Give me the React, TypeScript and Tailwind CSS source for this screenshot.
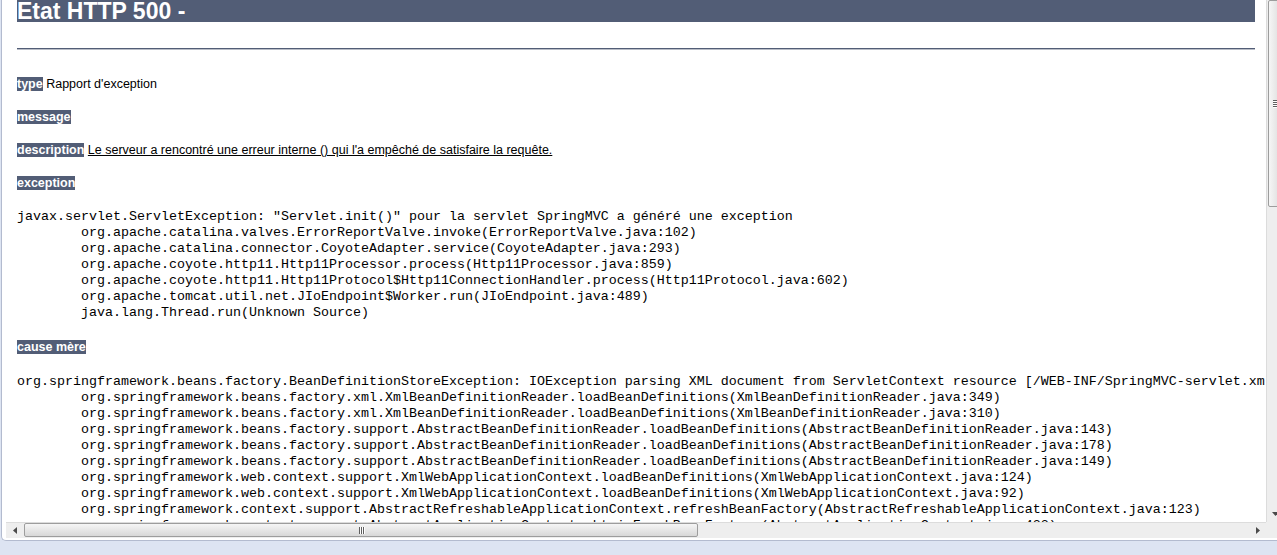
import React from 'react';

const sans = "font-['Liberation_Sans','Arial',sans-serif]";
const mono = "font-['Liberation_Mono','Courier_New',monospace]";

const TAB = '        ';

const exceptionLines = [
  'javax.servlet.ServletException: "Servlet.init()" pour la servlet SpringMVC a généré une exception',
  TAB + 'org.apache.catalina.valves.ErrorReportValve.invoke(ErrorReportValve.java:102)',
  TAB + 'org.apache.catalina.connector.CoyoteAdapter.service(CoyoteAdapter.java:293)',
  TAB + 'org.apache.coyote.http11.Http11Processor.process(Http11Processor.java:859)',
  TAB + 'org.apache.coyote.http11.Http11Protocol$Http11ConnectionHandler.process(Http11Protocol.java:602)',
  TAB + 'org.apache.tomcat.util.net.JIoEndpoint$Worker.run(JIoEndpoint.java:489)',
  TAB + 'java.lang.Thread.run(Unknown Source)',
];

const causeLines = [
  'org.springframework.beans.factory.BeanDefinitionStoreException: IOException parsing XML document from ServletContext resource [/WEB-INF/SpringMVC-servlet.xml]; nested exception is java.io.FileNotFoundException',
  TAB + 'org.springframework.beans.factory.xml.XmlBeanDefinitionReader.loadBeanDefinitions(XmlBeanDefinitionReader.java:349)',
  TAB + 'org.springframework.beans.factory.xml.XmlBeanDefinitionReader.loadBeanDefinitions(XmlBeanDefinitionReader.java:310)',
  TAB + 'org.springframework.beans.factory.support.AbstractBeanDefinitionReader.loadBeanDefinitions(AbstractBeanDefinitionReader.java:143)',
  TAB + 'org.springframework.beans.factory.support.AbstractBeanDefinitionReader.loadBeanDefinitions(AbstractBeanDefinitionReader.java:178)',
  TAB + 'org.springframework.beans.factory.support.AbstractBeanDefinitionReader.loadBeanDefinitions(AbstractBeanDefinitionReader.java:149)',
  TAB + 'org.springframework.web.context.support.XmlWebApplicationContext.loadBeanDefinitions(XmlWebApplicationContext.java:124)',
  TAB + 'org.springframework.web.context.support.XmlWebApplicationContext.loadBeanDefinitions(XmlWebApplicationContext.java:92)',
  TAB + 'org.springframework.context.support.AbstractRefreshableApplicationContext.refreshBeanFactory(AbstractRefreshableApplicationContext.java:123)',
  TAB + 'org.springframework.context.support.AbstractApplicationContext.obtainFreshBeanFactory(AbstractApplicationContext.java:422)',
  TAB + 'org.springframework.context.support.AbstractApplicationContext.refresh(AbstractApplicationContext.java:352)',
];

// label in the Tomcat style: white bold on slate
const Label = ({ children }: { children: React.ReactNode }) => (
  <b className="bg-[#525D76] text-white font-bold">{children}</b>
);

const Grip = ({ vertical }: { vertical?: boolean }) =>
  vertical ? (
    <div className="flex flex-col gap-[1px]">
      {[0, 1, 2, 3].map(i => (
        <div key={i} className="h-px w-[7px] bg-[#5f5f5f] shadow-[0_1px_0_#ffffff]" />
      ))}
    </div>
  ) : (
    <div className="flex gap-[1px]">
      {[0, 1, 2].map(i => (
        <div key={i} className="w-px h-[7px] bg-[#5f5f5f] shadow-[1px_0_0_#ffffff]" />
      ))}
    </div>
  );

const pClass = `${sans} text-[12.5px] leading-[15px] whitespace-nowrap`;

export default function App() {
  return (
    <div className="w-[1277px] h-[555px] bg-[#dde4f2] overflow-hidden">
      <div className="ml-[1px] h-[541px] bg-white border-l border-b border-[#b3bbcf] rounded-bl-[5px] flex flex-col overflow-hidden">
        <div className="flex h-[522px] shrink-0">
          {/* page viewport */}
          <div className="w-[1264px] shrink-0 overflow-hidden pl-[15px] text-black">
            <h1 className={`${sans} w-[1238px] h-[22px] leading-[22px] bg-[#525D76] text-white font-bold text-[23px] whitespace-nowrap overflow-hidden`}>
              Etat HTTP 500 -
            </h1>
            <div className="w-[1238px] mt-[26px] h-px bg-[#525D76]" />
            <div className="w-[1238px] h-px bg-[#b9bdc7]" />

            <p className={`${pClass} mt-[27px]`}>
              <Label>type</Label> Rapport d'exception
            </p>
            <p className={`${pClass} mt-[18px]`}>
              <Label>message</Label>
            </p>
            <p className={`${pClass} mt-[18px]`}>
              <Label>description</Label>{' '}
              <u>Le serveur a rencontré une erreur interne () qui l'a empêché de satisfaire la requête.</u>
            </p>
            <p className={`${pClass} mt-[18px]`}>
              <Label>exception</Label>
            </p>
            <pre className={`${mono} mt-[18px] text-[13.33px] leading-[16px] whitespace-pre`}>
              {exceptionLines.join('\n')}
            </pre>
            <p className={`${pClass} mt-[19px]`}>
              <Label>cause mère</Label>
            </p>
            <pre className={`${mono} mt-[19px] text-[13.33px] leading-[16px] whitespace-pre`}>
              {causeLines.join('\n')}
            </pre>
          </div>

          {/* vertical scrollbar, cut at the window edge */}
          <div className="w-[11px] shrink-0 overflow-hidden">
            <div className="w-[17px] h-full bg-[#eeeeee] border-l border-[#dcdcdc] flex flex-col">
              <div className="h-[207px] mx-[1px] rounded-[2px] border border-[#9d9d9d] bg-gradient-to-r from-[#f6f6f6] to-[#dcdcdc] flex items-center justify-center pl-[2px]">
                <Grip vertical />
              </div>
              <div className="flex-1" />
              <div className="h-[17px] flex items-center pl-[5px]">
                <svg width="7" height="4" viewBox="0 0 7 4">
                  <polygon points="0,0 7,0 3.5,4" fill="#4a4a4a" />
                </svg>
              </div>
            </div>
          </div>
        </div>

        {/* horizontal scrollbar */}
        <div className="flex h-[16px] shrink-0">
          <div className="ml-[4px] w-[1260px] shrink-0 flex bg-[#eeeeee] border-t border-[#dcdcdc]">
            <div className="w-[17px] shrink-0 flex items-center justify-center">
              <svg width="4" height="7" viewBox="0 0 4 7">
                <polygon points="4,0 4,7 0,3.5" fill="#4a4a4a" />
              </svg>
            </div>
            <div className="ml-[1px] w-[674px] h-[14px] rounded-[2px] border border-[#9d9d9d] bg-gradient-to-b from-[#f6f6f6] to-[#d8d8d8] flex items-center justify-center">
              <Grip />
            </div>
            <div className="flex-1" />
            <div className="w-[17px] shrink-0 flex items-center justify-center">
              <svg width="4" height="7" viewBox="0 0 4 7">
                <polygon points="0,0 0,7 4,3.5" fill="#4a4a4a" />
              </svg>
            </div>
          </div>
          <div className="flex-1 bg-[#eeeeee]" />
        </div>
      </div>
    </div>
  );
}
